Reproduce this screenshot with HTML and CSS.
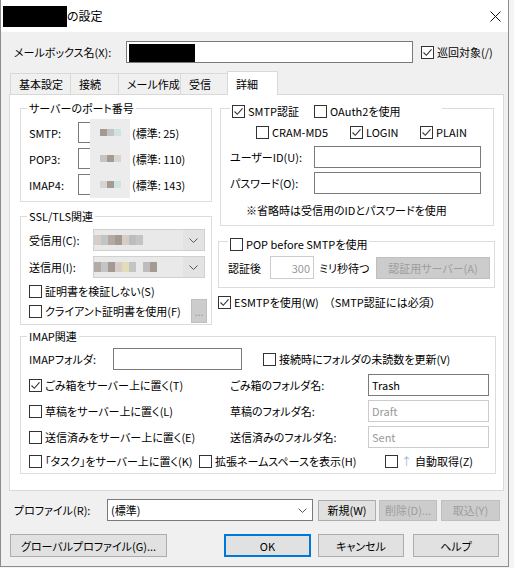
FILE: index.html
```html
<!DOCTYPE html>
<html lang="ja">
<head>
  <meta charset="UTF-8" />
  <title>の設定</title>
  <link rel="stylesheet" href="styles.css">
</head>
<body>
  <div class="window">

    <!-- TITLE BAR -->
    <div class="titlebar">
      <span class="redact title-redact"></span>
      <span class="title">の設定</span>
      <svg class="close" viewBox="0 0 11 11"><path d="M0.5 0.5L10.5 10.5M10.5 0.5L0.5 10.5"/></svg>
    </div>

    <div class="client">

      <!-- MAILBOX NAME -->
      <div class="mailbox-row">
        <span class="mailbox-label">メールボックス名(X):</span>
        <div class="textbox mailbox-input"><span class="redact name-redact"></span></div>
        <label class="check patrol"><span class="cb"><svg viewBox="0 0 11 11"><path d="M1.5 5.5l2.8 2.8 5.2-6"/></svg></span>巡回対象(/)</label>
      </div>

      <!-- TABS -->
      <div class="tabs">
        <span class="tab w1">基本設定</span>
        <span class="tab w2">接続</span>
        <span class="tab w3">メール作成</span>
        <span class="tab w4">受信</span>
        <span class="tab active">詳細</span>
      </div>

      <div class="panel">
        <div class="top">

          <div class="col-left">
            <fieldset class="group ports">
              <legend>サーバーのポート番号</legend>
              <div class="port-row">
                <span class="port-label">SMTP:</span>
                <span class="port-box"><span class="mosaic"><i class="m1"></i><i class="m2"></i><i class="m3"></i></span></span>
                <span>(標準: 25)</span>
              </div>
              <div class="port-row">
                <span class="port-label">POP3:</span>
                <span class="port-box"><span class="mosaic"><i class="m2"></i><i class="m1"></i><i class="m4"></i></span></span>
                <span>(標準: 110)</span>
              </div>
              <div class="port-row">
                <span class="port-label">IMAP4:</span>
                <span class="port-box"><span class="mosaic"><i class="m4"></i><i class="m1"></i><i class="m3"></i></span></span>
                <span>(標準: 143)</span>
              </div>
            </fieldset>

            <fieldset class="group ssl">
              <legend>SSL/TLS関連</legend>
              <div class="ssl-row">
                <span class="ssl-label">受信用(C):</span>
                <div class="blur-select">
                  <span class="blur-text"><i class="m5"></i><i class="m2"></i><i class="m6"></i><i class="m1"></i><i class="m5"></i><i class="m7"></i><i class="m2"></i></span>
                  <svg class="chev" viewBox="0 0 9 5"><path d="M0.5 0.5L4.5 4.5L8.5 0.5"/></svg>
                </div>
              </div>
              <div class="ssl-row">
                <span class="ssl-label">送信用(I):</span>
                <div class="blur-select">
                  <span class="blur-text"><i class="m6"></i><i class="m2"></i><i class="m1"></i><i class="m5"></i><i class="m8"></i><i class="m2"></i><i class="gap"></i><i class="m7"></i><i class="m1"></i></span>
                  <svg class="chev" viewBox="0 0 9 5"><path d="M0.5 0.5L4.5 4.5L8.5 0.5"/></svg>
                </div>
              </div>
              <label class="check cert1"><span class="cb"></span>証明書を検証しない(S)</label>
              <div class="cert2">
                <label class="check"><span class="cb"></span>クライアント証明書を使用(F)</label>
                <span class="btn disabled dots">...</span>
              </div>
            </fieldset>
          </div>

          <div class="col-right">
            <fieldset class="group check-group smtp">
              <legend>
                <label class="check"><span class="cb"><svg viewBox="0 0 11 11"><path d="M1.5 5.5l2.8 2.8 5.2-6"/></svg></span>SMTP認証</label>
                <label class="check oauth"><span class="cb"></span>OAuth2を使用</label>
              </legend>
              <div class="auth-row">
                <label class="check a1"><span class="cb"></span>CRAM-MD5</label>
                <label class="check a2"><span class="cb"><svg viewBox="0 0 11 11"><path d="M1.5 5.5l2.8 2.8 5.2-6"/></svg></span>LOGIN</label>
                <label class="check"><span class="cb"><svg viewBox="0 0 11 11"><path d="M1.5 5.5l2.8 2.8 5.2-6"/></svg></span>PLAIN</label>
              </div>
              <div class="field-row user">
                <span class="field-label">ユーザーID(U):</span>
                <div class="textbox auth-input"></div>
              </div>
              <div class="field-row pass">
                <span class="field-label">パスワード(O):</span>
                <div class="textbox auth-input"></div>
              </div>
              <div class="note">※省略時は受信用のIDとパスワードを使用</div>
            </fieldset>

            <fieldset class="group check-group pop">
              <legend>
                <label class="check"><span class="cb"></span>POP before SMTPを使用</label>
              </legend>
              <div class="pop-row">
                <span>認証後</span>
                <div class="textbox disabled wait-input">300</div>
                <span class="wait-unit">ミリ秒待つ</span>
                <span class="btn disabled auth-server">認証用サーバー(A)</span>
              </div>
            </fieldset>

            <label class="check esmtp"><span class="cb"><svg viewBox="0 0 11 11"><path d="M1.5 5.5l2.8 2.8 5.2-6"/></svg></span>ESMTPを使用(W) <span class="wide">（SMTP認証には必須）</span></label>
          </div>
        </div>

        <fieldset class="group imap">
          <legend>IMAP関連</legend>
          <div class="imap-row">
            <span class="imap-label">IMAPフォルダ:</span>
            <div class="textbox imap-input"></div>
            <label class="check unread"><span class="cb"></span>接続時にフォルダの未読数を更新(V)</label>
          </div>
          <div class="imap-row">
            <label class="check col1"><span class="cb"><svg viewBox="0 0 11 11"><path d="M1.5 5.5l2.8 2.8 5.2-6"/></svg></span>ごみ箱をサーバー上に置く(T)</label>
            <span class="col2">ごみ箱のフォルダ名:</span>
            <div class="textbox folder">Trash</div>
          </div>
          <div class="imap-row">
            <label class="check col1"><span class="cb"></span>草稿をサーバー上に置く(L)</label>
            <span class="col2">草稿のフォルダ名:</span>
            <div class="textbox folder disabled">Draft</div>
          </div>
          <div class="imap-row">
            <label class="check col1"><span class="cb"></span>送信済みをサーバー上に置く(E)</label>
            <span class="col2">送信済みのフォルダ名:</span>
            <div class="textbox folder disabled">Sent</div>
          </div>
          <div class="imap-row last">
            <label class="check l1"><span class="cb"></span>「タスク」をサーバー上に置く(K)</label>
            <label class="check l2"><span class="cb"></span>拡張ネームスペースを表示(H)</label>
            <label class="check"><span class="cb"></span><span class="arrow">↑</span> 自動取得(Z)</label>
          </div>
        </fieldset>
      </div>

      <!-- PROFILE -->
      <div class="profile-row">
        <span class="profile-label">プロファイル(R):</span>
        <div class="textbox profile-select">
          <span>(標準)</span>
          <svg class="chev" viewBox="0 0 9 5"><path d="M0.5 0.5L4.5 4.5L8.5 0.5"/></svg>
        </div>
        <span class="btn small new">新規(W)</span>
        <span class="btn small disabled del">削除(D)...</span>
        <span class="btn small disabled imp">取込(Y)</span>
      </div>

      <!-- DIALOG BUTTONS -->
      <div class="button-row">
        <span class="btn global">グローバルプロファイル(G)...</span>
        <span class="btn ok">OK</span>
        <span class="btn cancel">キャンセル</span>
        <span class="btn help">ヘルプ</span>
      </div>
    </div>
  </div>
</body>
</html>
```

FILE: styles.css
```css
/* BASIC RESET */
* {
  margin: 0;
  padding: 0;
  box-sizing: border-box;
}
body {
  font-family: "Noto Sans CJK JP", "Noto Sans", sans-serif;
  font-size: 11px;
  line-height: 14px;
  font-feature-settings: "palt";
  color: #000;
  background: #f4f4f4;
}

/* WINDOW */
.window {
  width: 509px;
  height: 567px;
  border: 1px solid #8c8c8c;
  border-top: none;
  background: #f0f0f0;
}
.titlebar {
  height: 32px;
  background: #fff;
  display: flex;
  align-items: center;
  padding-left: 2px;
}
.redact {
  display: block;
  background: #000;
}
.title-redact {
  width: 64px;
  height: 21px;
}
.title {
  font-size: 12px;
}
.close {
  width: 11px;
  height: 11px;
  margin-left: auto;
  margin-right: 7px;
  stroke: #111;
  stroke-width: 1;
  fill: none;
}

/* COMMON CONTROLS */
.check {
  display: flex;
  align-items: center;
  gap: 3px;
  white-space: nowrap;
}
.cb {
  width: 13px;
  height: 13px;
  flex: none;
  border: 1px solid #333;
  background: #fff;
  display: flex;
}
.cb svg {
  width: 11px;
  height: 11px;
  fill: none;
  stroke: #333;
  stroke-width: 1.1;
}
.textbox {
  height: 22px;
  border: 1px solid #7a7a7a;
  background: #fff;
  display: flex;
  align-items: center;
  padding: 0 3px;
}
.textbox.disabled {
  border-color: #cccccc;
  color: #9a9a9a;
}
.btn {
  height: 23px;
  border: 1px solid #adadad;
  background: #e1e1e1;
  display: flex;
  align-items: center;
  justify-content: center;
  white-space: nowrap;
}
.btn.disabled {
  background: #cccccc;
  border-color: #bfbfbf;
  color: #9d9d9d;
}
.chev {
  width: 9px;
  height: 5px;
  fill: none;
  stroke: #555;
  stroke-width: 1;
}

/* MAILBOX ROW */
.mailbox-row {
  display: flex;
  align-items: center;
  margin-top: 9px;
  padding-left: 13px;
  height: 22px;
}
.mailbox-label {
  width: 112px;
}
.mailbox-input {
  width: 287px;
  padding: 0 2px;
}
.name-redact {
  width: 66px;
  height: 18px;
  margin-top: 1px;
}
.patrol {
  margin-left: 8px;
}

/* TABS */
.tabs {
  display: flex;
  align-items: flex-end;
  height: 23px;
  margin-top: 8px;
  margin-left: 9px;
}
.tab {
  height: 21px;
  border: 1px solid #d9d9d9;
  border-bottom: none;
  margin-right: -1px;
  padding-left: 8px;
  display: flex;
  align-items: center;
  background: #f0f0f0;
}
.w1 { width: 61px; }
.w2 { width: 49px; }
.w3 { width: 63px; }
.w4 { width: 48px; }
.tab.active {
  width: 51px;
  height: 24px;
  margin-bottom: -1px;
  background: #fff;
  position: relative;
  z-index: 1;
}

/* PANEL */
.panel {
  width: 495px;
  height: 397px;
  margin-left: 8px;
  border: 1px solid #d9d9d9;
  background: #fff;
  padding: 6px 0 0 10px;
}
.top {
  display: flex;
  align-items: flex-start;
  gap: 6px;
}
.col-left {
  width: 192px;
}
.col-right {
  width: 277px;
}

/* GROUP BOXES */
.group {
  border: 1px solid #dcdcdc;
  min-width: 0;
  padding-left: 8px;
}
.group legend {
  height: 14px;
  padding: 0 2px;
  margin-left: -2px;
  white-space: nowrap;
}
.check-group {
  padding-left: 9px;
}
.check-group legend {
  display: flex;
  margin-left: 0;
}
.check-group legend .check {
  height: 20px;
}

/* PORTS */
.ports {
  width: 192px;
  padding-top: 7px;
  padding-bottom: 6px;
}
.port-row {
  display: flex;
  align-items: center;
  height: 21px;
  margin-bottom: 5px;
}
.port-row:last-child {
  margin-bottom: 0;
}
.port-label {
  width: 49px;
}
.port-box {
  width: 52px;
  height: 21px;
  border: 1px solid #7a7a7a;
  border-right: none;
  margin-right: 2px;
  display: flex;
  justify-content: flex-end;
}
.mosaic {
  width: 40px;
  height: 27px;
  margin: -4px 0;
  background: #ececec;
  display: flex;
  align-items: center;
  justify-content: center;
}
.mosaic i,
.blur-text i {
  display: block;
  width: 7px;
  height: 7px;
}
.m1 { background: #a39a94; }
.m2 { background: #c4c4c4; }
.m3 { background: #cfe3e3; }
.m4 { background: #d8d4d0; }
.m5 { background: #d9cbc6; }
.m6 { background: #b3aaa6; }
.m7 { background: #bdbdbd; }
.m8 { background: #e2ddb8; }
.gap { background: transparent; }

/* SSL */
.ssl {
  width: 192px;
  margin-top: 7px;
  padding-top: 6px;
  padding-bottom: 1px;
}
.ssl-row {
  display: flex;
  align-items: center;
  height: 22px;
  margin-bottom: 5px;
}
.ssl-label {
  width: 64px;
}
.blur-select {
  width: 112px;
  height: 22px;
  background: #e3e3e3;
  border: 1px solid #d0d0d0;
  display: flex;
  align-items: center;
  padding: 0 6px 0 0;
}
.blur-text {
  display: flex;
  height: 100%;
  align-items: center;
  flex: 1;
  background: #e9e9e9;
  margin-right: 6px;
}
.blur-text i {
  height: 10px;
}
.cert1 {
  height: 16px;
  margin-top: 4px;
}
.cert2 {
  display: flex;
  align-items: center;
  justify-content: space-between;
  height: 24px;
  padding-right: 4px;
}
.dots {
  width: 16px;
  height: 24px;
  color: #666;
  align-items: flex-end;
  padding-bottom: 4px;
}

/* SMTP AUTH */
.smtp {
  width: 274px;
  margin-left: 2px;
  padding-bottom: 8px;
}
.oauth {
  margin-left: 15px;
  padding-right: 40px;
}
.auth-row {
  display: flex;
  align-items: center;
  height: 14px;
  margin-top: 10px;
  padding-left: 26px;
}
.a1 { width: 94px; }
.a2 { width: 70px; }
.field-row {
  display: flex;
  align-items: center;
  height: 22px;
}
.field-row.user { margin-top: 7px; }
.field-row.pass { margin-top: 4px; }
.field-label {
  width: 84px;
}
.auth-input {
  width: 167px;
}
.note {
  margin-top: 9px;
  padding-left: 16px;
  height: 14px;
}

/* POP BEFORE SMTP */
.pop {
  width: 277px;
  margin-top: 8px;
  padding-top: 8px;
  padding-bottom: 8px;
  padding-right: 4px;
}
.pop-row {
  display: flex;
  align-items: center;
  height: 23px;
}
.wait-input {
  width: 44px;
  height: 23px;
  margin-left: 9px;
  justify-content: flex-end;
}
.wait-unit {
  margin-left: 5px;
}
.auth-server {
  width: 114px;
  height: 22px;
  margin-left: auto;
}
.esmtp {
  margin-top: 7px;
  height: 14px;
}
.wide {
  font-feature-settings: normal;
  margin-left: 2px;
}

/* IMAP */
.imap {
  width: 476px;
  margin-top: 4px;
  padding-top: 5px;
  padding-bottom: 3px;
}
.imap-row {
  display: flex;
  align-items: center;
  height: 22px;
  margin-bottom: 4px;
}
.imap-row.last {
  height: 18px;
  margin-bottom: 0;
}
.imap-label {
  width: 84px;
}
.imap-input {
  width: 129px;
}
.unread {
  margin-left: 21px;
}
.col1 { width: 201px; }
.col2 { width: 138px; }
.folder {
  width: 121px;
}
.l1 { width: 170px; }
.l2 { width: 186px; }
.arrow {
  color: #9fb6cc;
}

/* PROFILE ROW */
.profile-row {
  display: flex;
  align-items: center;
  height: 22px;
  margin-top: 8px;
  padding-left: 13px;
}
.profile-label {
  width: 93px;
}
.profile-select {
  width: 206px;
  justify-content: space-between;
  padding-right: 5px;
}
.btn.small {
  height: 21px;
  width: 58px;
}
.new { margin-left: 5px; }
.del { margin-left: 3px; }
.btn.small.imp {
  margin-left: 4px;
  width: 59px;
}

/* BUTTON ROW */
.button-row {
  display: flex;
  align-items: center;
  height: 23px;
  margin-top: 13px;
  padding-left: 9px;
}
.global { width: 157px; }
.ok {
  width: 87px;
  margin-left: 57px;
  border: 2px solid #0078d7;
}
.cancel {
  width: 86px;
  margin-left: 7px;
}
.help {
  width: 86px;
  margin-left: 9px;
}
```
